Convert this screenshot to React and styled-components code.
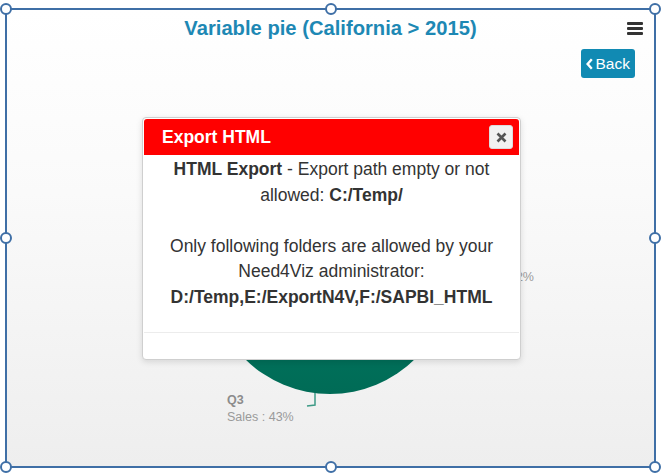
import React from 'react'
import styled, { createGlobalStyle } from 'styled-components'

const GlobalStyle = createGlobalStyle`
  html, body {
    margin: 0;
    padding: 0;
    background: #ffffff;
  }
  body {
    font-family: "Liberation Sans", Arial, sans-serif;
  }
`

const Page = styled.div`
  width: 661px;
  height: 475px;
  padding: 8px 0 0 5px;
  box-sizing: border-box;
`

const Frame = styled.div`
  position: relative;
  width: 651px;
  height: 460px;
  box-sizing: border-box;
  border: 2px solid #3f6fa6;
  background: linear-gradient(to bottom, #ffffff 0%, #fafafa 40%, #eeeeee 100%);
  display: flex;
  flex-direction: column;
`

const Handle = styled.span`
  position: absolute;
  width: 8px;
  height: 8px;
  border: 2px solid #3f6fa6;
  border-radius: 50%;
  background: #ffffff;
  left: ${p => p.$x};
  top: ${p => p.$y};
  transform: translate(-50%, -50%);
  z-index: 5;
`

const TitleBar = styled.div`
  display: grid;
  grid-template-columns: 1fr auto 1fr;
  align-items: center;
  height: 40px;
`

const Title = styled.h1`
  grid-column: 2;
  margin: 0;
  font-size: 20.2px;
  font-weight: bold;
  color: #1d88b4;
`

const MenuButton = styled.div`
  grid-column: 3;
  justify-self: end;
  margin-right: 11px;
  margin-top: -1px;
  width: 16px;
  display: flex;
  flex-direction: column;
  gap: 2px;
`

const MenuBar = styled.span`
  display: block;
  height: 3px;
  background: #333333;
  border-radius: 1px;
`

const BackRow = styled.div`
  height: 32px;
  display: flex;
  justify-content: flex-end;
  align-items: flex-end;
  padding-right: 19px;
`

const BackButton = styled.button`
  display: flex;
  align-items: center;
  gap: 3px;
  height: 29px;
  padding: 0 5px 0 5px;
  border: none;
  border-radius: 3px;
  background: #118ab3;
  color: #ffffff;
  font-family: "Liberation Sans", Arial, sans-serif;
  font-size: 15.5px;
  cursor: pointer;
`

const Plot = styled.div`
  flex: 1;
`

const Modal = styled.div`
  position: absolute;
  left: 135px;
  top: 107px;
  width: 379px;
  height: 243px;
  box-sizing: border-box;
  padding: 1px;
  border: 1px solid #cfcfcf;
  border-radius: 4px;
  background: #ffffff;
  box-shadow: 0 2px 6px rgba(0, 0, 0, 0.12);
  display: flex;
  flex-direction: column;
  z-index: 4;
`

const ModalHeader = styled.div`
  height: 36px;
  background: #ff0000;
  border-radius: 3px 3px 0 0;
  display: flex;
  align-items: center;
  justify-content: space-between;
  padding: 0 6px 0 18px;
`

const ModalTitle = styled.span`
  color: #ffffff;
  font-size: 17.5px;
  font-weight: bold;
`

const CloseButton = styled.button`
  width: 24px;
  height: 24px;
  padding: 0;
  border: 1px solid #dcdcdc;
  border-radius: 3px;
  background: #f2f2f2;
  display: flex;
  align-items: center;
  justify-content: center;
`

const ModalBody = styled.div`
  flex: 1;
  padding: 2px 10px 0;
  text-align: center;
  font-size: 17.5px;
  line-height: 25.5px;
  color: #333333;
  border-bottom: 1px solid #ececec;
`

const ModalFooter = styled.div`
  height: 25px;
`

const handles = [
  ['-1px', '-1px'], ['50%', '-1px'], ['calc(100% + 1px)', '-1px'],
  ['-1px', '50%'], ['calc(100% + 1px)', '50%'],
  ['-1px', 'calc(100% + 1px)'], ['50%', 'calc(100% + 1px)'], ['calc(100% + 1px)', 'calc(100% + 1px)'],
]

function PieChart() {
  return (
    <svg width="647" height="384" viewBox="0 0 647 384">
      <defs>
        <linearGradient id="slice" x1="0" y1="0" x2="0" y2="1">
          <stop offset="0" stopColor="#00876d" />
          <stop offset="1" stopColor="#006b56" />
        </linearGradient>
      </defs>
      <circle cx="323" cy="195" r="121" fill="url(#slice)" />
      <polyline points="308,315 308,327 300,328" fill="none" stroke="#3d9a86" strokeWidth="1.5" />
      <text x="220" y="326" fontFamily="Liberation Sans, Arial, sans-serif" fontSize="12.5" fontWeight="bold" fill="#8c8c8c">Q3</text>
      <text x="220" y="343" fontFamily="Liberation Sans, Arial, sans-serif" fontSize="12.5" fill="#9a9a9a">Sales : 43%</text>
      <text x="527" y="203" textAnchor="end" fontFamily="Liberation Sans, Arial, sans-serif" fontSize="12.5" fill="#9a9a9a">Sales : 22%</text>
    </svg>
  )
}

export default function App() {
  return (
    <Page>
      <GlobalStyle />
      <Frame>
        {handles.map(([x, y]) => <Handle key={x + y} $x={x} $y={y} />)}
        <TitleBar>
          <Title>Variable pie (California &gt; 2015)</Title>
          <MenuButton>
            <MenuBar />
            <MenuBar />
            <MenuBar />
          </MenuButton>
        </TitleBar>
        <BackRow>
          <BackButton>
            <svg width="7" height="12" viewBox="0 0 7 12">
              <path d="M5.8 1.2 L1.6 6 L5.8 10.8" fill="none" stroke="#ffffff" strokeWidth="2.4" />
            </svg>
            Back
          </BackButton>
        </BackRow>
        <Plot>
          <PieChart />
        </Plot>
        <Modal>
          <ModalHeader>
            <ModalTitle>Export HTML</ModalTitle>
            <CloseButton>
              <svg width="11" height="11" viewBox="0 0 11 11">
                <path d="M1.5 1.5 L9.5 9.5 M9.5 1.5 L1.5 9.5" stroke="#555555" strokeWidth="2.6" />
              </svg>
            </CloseButton>
          </ModalHeader>
          <ModalBody>
            <b>HTML Export</b> - Export path empty or not allowed: <b>C:/Temp/</b>
            <br />
            <br />
            Only following folders are allowed by your Need4Viz administrator:
            <br />
            <b>D:/Temp,E:/ExportN4V,F:/SAPBI_HTML</b>
          </ModalBody>
          <ModalFooter />
        </Modal>
      </Frame>
    </Page>
  )
}
